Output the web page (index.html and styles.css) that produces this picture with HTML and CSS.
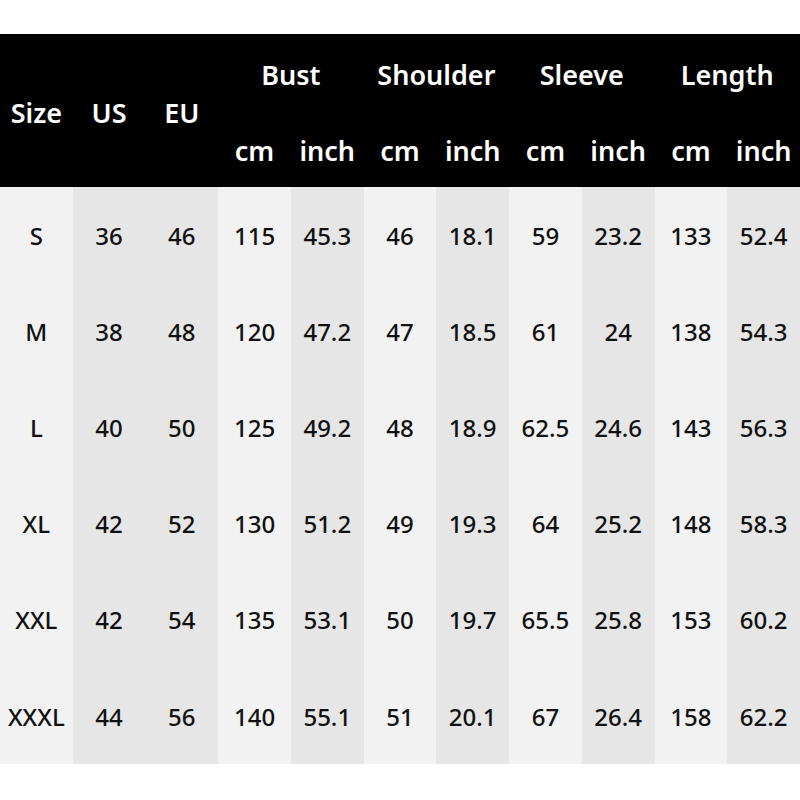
FILE: index.html
```html
<!DOCTYPE html>
<html>
<head>
<meta charset="utf-8">
<link rel="stylesheet" href="styles.css">
</head>
<body>
<div class="chart">
  <div class="h tall">Size</div>
  <div class="h tall">US</div>
  <div class="h tall">EU</div>
  <div class="h wide">Bust</div>
  <div class="h wide">Shoulder</div>
  <div class="h wide">Sleeve</div>
  <div class="h wide">Length</div>
  <div class="h sub">cm</div><div class="h sub">inch</div>
  <div class="h sub">cm</div><div class="h sub">inch</div>
  <div class="h sub">cm</div><div class="h sub">inch</div>
  <div class="h sub">cm</div><div class="h sub">inch</div>

  <div class="c l">S</div><div class="c g">36</div><div class="c g">46</div><div class="c l">115</div><div class="c g">45.3</div><div class="c l">46</div><div class="c g">18.1</div><div class="c l">59</div><div class="c g">23.2</div><div class="c l">133</div><div class="c g">52.4</div>
  <div class="c l">M</div><div class="c g">38</div><div class="c g">48</div><div class="c l">120</div><div class="c g">47.2</div><div class="c l">47</div><div class="c g">18.5</div><div class="c l">61</div><div class="c g">24</div><div class="c l">138</div><div class="c g">54.3</div>
  <div class="c l">L</div><div class="c g">40</div><div class="c g">50</div><div class="c l">125</div><div class="c g">49.2</div><div class="c l">48</div><div class="c g">18.9</div><div class="c l">62.5</div><div class="c g">24.6</div><div class="c l">143</div><div class="c g">56.3</div>
  <div class="c l">XL</div><div class="c g">42</div><div class="c g">52</div><div class="c l">130</div><div class="c g">51.2</div><div class="c l">49</div><div class="c g">19.3</div><div class="c l">64</div><div class="c g">25.2</div><div class="c l">148</div><div class="c g">58.3</div>
  <div class="c l">XXL</div><div class="c g">42</div><div class="c g">54</div><div class="c l">135</div><div class="c g">53.1</div><div class="c l">50</div><div class="c g">19.7</div><div class="c l">65.5</div><div class="c g">25.8</div><div class="c l">153</div><div class="c g">60.2</div>
  <div class="c l">XXXL</div><div class="c g">44</div><div class="c g">56</div><div class="c l">140</div><div class="c g">55.1</div><div class="c l">51</div><div class="c g">20.1</div><div class="c l">67</div><div class="c g">26.4</div><div class="c l">158</div><div class="c g">62.2</div>
</div>
</body>
</html>
```

FILE: styles.css
```css
html, body {
  margin: 0;
  padding: 0;
  background: #ffffff;
}
body {
  width: 800px;
  height: 800px;
  padding-top: 34px;
  box-sizing: border-box;
  font-family: "Noto Sans", "Noto Sans CJK SC", sans-serif;
}
.chart {
  display: grid;
  grid-template-columns: repeat(11, 1fr);
  grid-template-rows: 76px 77px repeat(6, 96.2px);
  width: 800px;
}
.h {
  background: #000000;
  color: #ffffff;
  font-size: 27px;
  font-weight: 600;
  display: flex;
  align-items: center;
  justify-content: center;
  padding-top: 4px;
  box-sizing: border-box;
}
.tall {
  grid-row: span 2;
}
.wide {
  grid-column: span 2;
}
.c {
  display: flex;
  align-items: center;
  justify-content: center;
  font-size: 24px;
  font-weight: 500;
  color: #111111;
}
.l { background: #f2f2f2; }
.g { background: #e6e6e6; }
```
